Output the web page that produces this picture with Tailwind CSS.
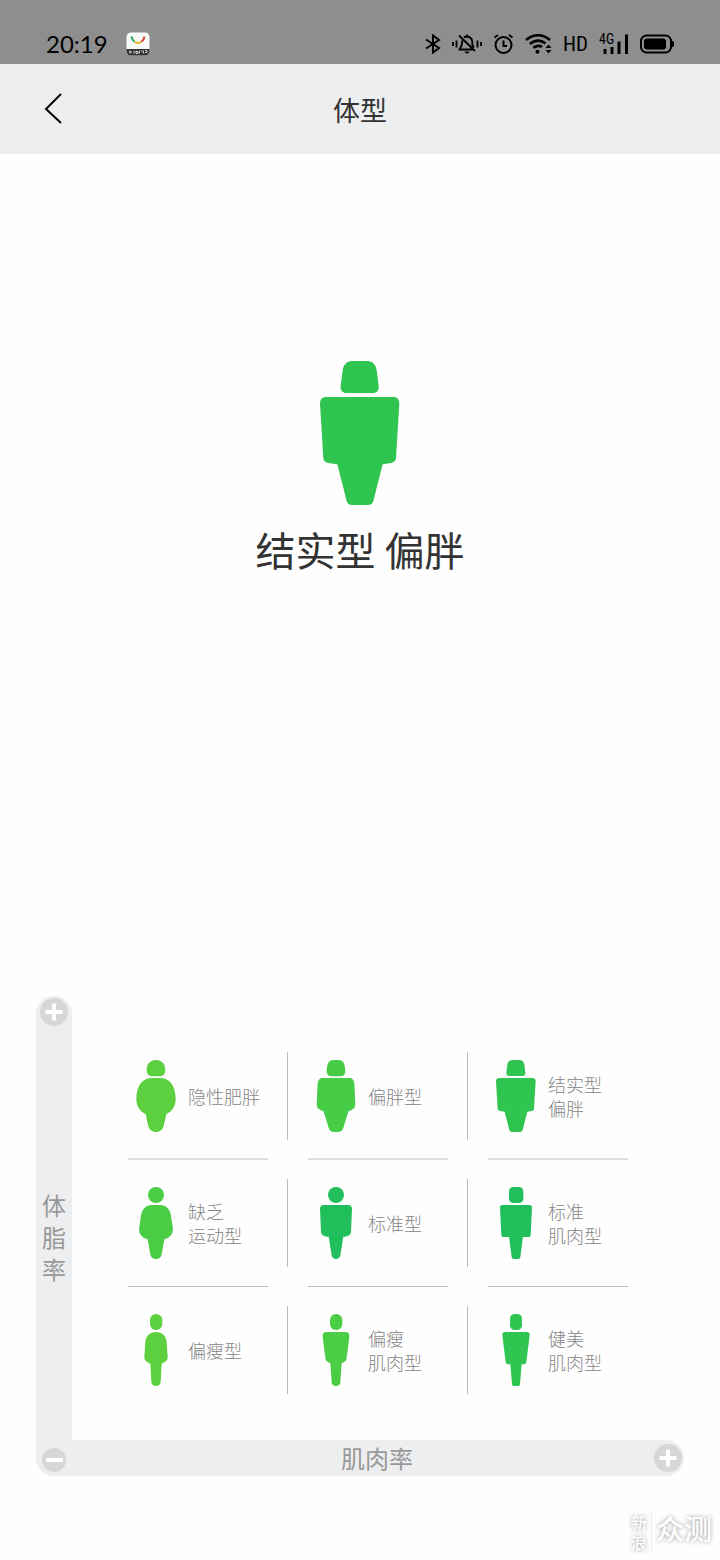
<!DOCTYPE html>
<html lang="zh-CN">
<head>
<meta charset="utf-8">
<meta name="viewport" content="width=device-width, initial-scale=1">
<title>体型</title>
<script src="https://cdn.jsdelivr.net/npm/@tailwindcss/browser@4"></script>
</head>
<body class="flex min-h-screen flex-col bg-[#fefefe] font-['Noto_Sans_CJK_SC',sans-serif] text-[#333]">

<!-- Body silhouettes, shared by the hero and the matrix -->
<svg class="hidden" aria-hidden="true">
  <symbol id="b1" viewBox="0 0 120 216"><path d="M60 0C78 0 88 13 88 30C88 42 80 49 70 49H50C40 49 32 42 32 30C32 13 42 0 60 0ZM45 54H75C103 54 119 82 119 116C119 140 107 155 91 162L84 195C81 209 72 216 60 216C48 216 39 209 36 195L29 162C13 155 1 140 1 116C1 82 17 54 45 54Z"/></symbol>
  <symbol id="b2" viewBox="0 0 120 216"><path d="M52 0H68C80 0 86 9 87 24L88 34C88 44 82 49 74 49H46C38 49 32 44 32 34L33 24C34 9 40 0 52 0ZM20 54H100C109 54 114 60 115 70L118 132C118 142 113 148 99 154C96 155 96 158 95 162L82 203C79 212 74 216 66 216H54C46 216 41 212 38 203L25 162C24 158 24 155 21 154C7 148 2 142 2 132L5 70C6 60 11 54 20 54Z"/></symbol>
  <symbol id="b3" viewBox="0 0 120 216"><path d="M48 0H71C79 0 84 6 85 14L88 37C89 44 85 48 79 48H40C34 48 30 44 31 37L34 14C35 6 40 0 48 0ZM9 54H110C116 54 119 58 119 64L114 146C114 150 111 152 107 153L94 155L80 210C79 214 76 216 72 216H48C44 216 41 214 40 210L26 155L12 153C8 152 5 150 5 146L0 64C0 58 3 54 9 54Z"/></symbol>
  <symbol id="b4" viewBox="0 0 120 216"><circle cx="60" cy="24" r="24"/><path d="M48 54H72C94 54 104 72 106 92L111 126C111 144 98 154 85 157L77 203C75 212 68 216 60 216C52 216 45 212 43 203L35 157C22 154 9 144 9 126L14 92C16 72 26 54 48 54Z"/></symbol>
  <symbol id="b5" viewBox="0 0 120 216"><circle cx="60" cy="24" r="24"/><path d="M24 54H96C104 54 108 58 108 66L105 134C104 144 96 149 82 149L73 205C72 212 67 216 60 216C53 216 48 212 47 205L38 149C24 149 16 144 15 134L12 66C12 58 16 54 24 54Z"/></symbol>
  <symbol id="b6" viewBox="0 0 120 216"><rect x="39" y="0" width="43" height="48" rx="13"/><path d="M20 54H100C106 54 108 57 108 62L104 144C104 148 102 150 98 150H81L73 210C72 214 70 216 66 216H54C50 216 48 214 47 210L39 150H22C18 150 16 148 16 144L12 62C12 57 14 54 20 54Z"/></symbol>
  <symbol id="b7" viewBox="0 0 120 216"><rect x="42" y="0" width="37" height="48" rx="18"/><path d="M60 54C78 54 91 66 92 84L95 128C95 139 88 144 77 149L74 203C73 212 68 216 60 216C52 216 47 212 46 203L43 149C32 144 25 139 25 128L28 84C29 66 42 54 60 54Z"/></symbol>
  <symbol id="b8" viewBox="0 0 120 216"><rect x="42" y="0" width="37" height="48" rx="18"/><path d="M31 54H89C97 54 101 60 100 68L92 132C91 140 87 143 77 148L73 205C73 212 68 216 60 216C52 216 47 212 47 205L43 148C33 143 29 140 28 132L20 68C19 60 23 54 31 54Z"/></symbol>
  <symbol id="b9" viewBox="0 0 120 216"><rect x="42" y="0" width="36" height="48" rx="14"/><path d="M28 54H92C99 54 102 58 101 64L91 145C90 149 88 151 85 151H77L72 211C72 214 70 216 67 216H53C50 216 48 214 48 211L43 151H35C32 151 30 149 29 145L19 64C18 58 21 54 28 54Z"/></symbol>
</svg>

<!-- Status bar -->
<div class="flex h-16 items-center justify-between bg-[#8e8e8e] pt-6 pr-[46px] pl-[46px] text-black">
  <div class="flex items-center gap-[18px]">
    <time class="font-['Lato',sans-serif] text-2xl leading-6">20:19</time>
    <svg class="h-6 w-6" viewBox="0 0 24 24" aria-hidden="true">
      <rect x=".5" y=".5" width="23" height="23" rx="4.500" fill="#fafafa"/>
      <path d="M.5 17H23.500V19A4.500 4.500 0 0 1 19 23.500H5A4.500 4.500 0 0 1 .5 19Z" fill="#333"/>
      <g fill="none" stroke-width="2">
        <path d="M5.500 4.500Q6 8 8.500 9.800" stroke="#2fa866"/>
        <path d="M8.500 9.800Q12 12 15.500 9.800" stroke="#e8b93a"/>
        <path d="M15.500 9.800Q18 8 18.500 4.500" stroke="#d8453e"/>
      </g>
      <path d="M4 18.500v3M3 20h3M8 19v2.500M10 18.500v3h2v-2h-2M13.500 18.500v3M15 19h2.500v2.500M19 18.500h2v2h-2" fill="none" stroke="#ddd" stroke-width=".9"/>
    </svg>
  </div>
  <div class="flex items-center gap-[11px]">
    <svg class="h-5 w-4" viewBox="0 0 16 20" fill="none" stroke="#000" stroke-width="2" aria-label="蓝牙"><path d="M1 5.500L14 14L8 18.500V1.500L14 6L1 14.500"/></svg>
    <svg class="h-5 w-[30px]" viewBox="0 0 30 20" fill="none" stroke="#000" stroke-width="1.800" aria-label="静音"><path d="M1 8v4M4.500 6.500v7M25.500 6.500v7M29 8v4M7 1.500L23 17M10.500 6.500Q9.800 8 9.800 11L7.500 15.500H20.500M12 3.500Q13 2.500 15 2.500Q20 3 20.300 8V11L22 13.500M15 .5V3"/><path d="M12.500 17.500H17.500Q17 19.500 15 19.500T12.500 17.500Z" fill="#000" stroke="none"/></svg>
    <svg class="h-5 w-[21px]" viewBox="0 0 21 20" fill="none" stroke="#000" stroke-width="2" aria-label="闹钟"><circle cx="10.500" cy="11" r="8"/><path d="M10.500 6.500V12H14M1.500 3.500L5 1M19.500 3.500L16 1"/></svg>
    <svg class="h-5 w-[27px]" viewBox="0 0 27 20" fill="none" stroke="#000" stroke-width="2.600" aria-label="无线网络"><path d="M1 6Q13 -3.500 25 6M4.800 10Q13 3.500 20.500 9.500M8.300 13.800Q13 10.300 17 13"/><circle cx="12.500" cy="17.700" r="2" fill="#000" stroke="none"/><path d="M20.500 14L23.500 10.500L26.500 14ZM20.500 16L23.500 19.500L26.500 16Z" fill="#000" stroke="none"/></svg>
    <span class="font-['Roboto_Condensed','Liberation_Sans_Narrow','Roboto',sans-serif] text-[21px] leading-5">HD</span>
    <svg class="h-6 w-[30px] overflow-visible" viewBox="0 0 30 24" aria-label="信号"><text x="0" y="12" class="font-['Roboto_Condensed','Roboto',sans-serif] text-sm">4G</text><path d="M4.500 17h3v5h-3zM11.500 15h3v7h-3zM18.500 9.500h3V22h-3zM26 2.500h3V22h-3z"/></svg>
    <svg class="h-5 w-[34px]" viewBox="0 0 34 20" aria-label="电量"><rect x="1" y="1.500" width="30" height="17" rx="5.500" fill="none" stroke="#000" stroke-width="2"/><rect x="4" y="4.500" width="22" height="11" rx="3"/><path d="M31.500 7H32.500Q34 7 34 8.500V11.500Q34 13 32.500 13H31.500Z"/></svg>
  </div>
</div>

<!-- Title bar -->
<header class="grid h-[90px] grid-cols-[1fr_auto_1fr] items-center bg-[#edeef0] px-9">
  <button type="button" aria-label="返回" class="flex h-12 w-[34px] items-center justify-center">
    <svg class="h-8 w-[18px]" viewBox="0 0 18 32" fill="none" stroke="#000" stroke-width="2"><path d="M17 1L2 16L17 30"/></svg>
  </button>
  <h1 class="pt-0.5 text-[27px] leading-9">体型</h1>
</header>

<main class="flex flex-1 flex-col">
  <section class="flex flex-col items-center pt-[207px]">
    <svg class="h-36 w-20 fill-[#30c451]" aria-hidden="true"><use href="#b3"/></svg>
    <h2 class="mt-5 text-[40px] leading-[48px]">结实型 偏胖</h2>
  </section>

  <section class="mx-9 mt-auto grid grid-cols-[36px_1fr]">
    <div class="row-span-2 flex flex-col items-center justify-between rounded-t-full rounded-bl-full bg-[#edeef0] pt-0.5 pb-1 text-2xl leading-8 text-[#999]">
      <svg class="h-7 w-7" viewBox="0 0 28 28" aria-label="高"><circle cx="14" cy="14" r="14" fill="#d6d7d8"/><path d="M5.500 14H22.500M14 5.500V22.500" stroke="#fff" stroke-width="4"/></svg>
      <p class="w-6 break-all">体脂率</p>
      <svg class="h-6 w-6" viewBox="0 0 24 24" aria-label="低"><circle cx="12" cy="12" r="12" fill="#d6d7d8"/><path d="M4 12H21" stroke="#fff" stroke-width="4"/></svg>
    </div>

    <div class="px-14 pt-14 pb-[46px] text-lg leading-6 font-light text-[#858585]">
      <div class="flex h-[88px]">
        <div class="flex flex-1 items-center gap-3 pl-2"><svg class="h-[72px] w-10 fill-[#5cd03e]"><use href="#b1"/></svg><p>隐性肥胖</p></div>
        <div class="mr-5 ml-[19px] w-px bg-[#bbb]"></div>
        <div class="flex flex-1 items-center gap-3 pl-2"><svg class="h-[72px] w-10 fill-[#46cc46]"><use href="#b2"/></svg><p>偏胖型</p></div>
        <div class="mr-5 ml-[19px] w-px bg-[#bbb]"></div>
        <div class="flex flex-1 items-center gap-3 pl-2"><svg class="h-[72px] w-10 fill-[#30c451]"><use href="#b3"/></svg><p>结实型<br>偏胖</p></div>
      </div>
      <div class="grid grid-cols-3 gap-x-10 pt-[18px] pb-[19px]"><hr class="h-0.5 border-0 bg-[#e0e0e0]"><hr class="h-0.5 border-0 bg-[#e0e0e0]"><hr class="h-0.5 border-0 bg-[#e0e0e0]"></div>
      <div class="flex h-[88px]">
        <div class="flex flex-1 items-center gap-3 pl-2"><svg class="h-[72px] w-10 fill-[#4bce46]"><use href="#b4"/></svg><p>缺乏<br>运动型</p></div>
        <div class="mr-5 ml-[19px] w-px bg-[#bbb]"></div>
        <div class="flex flex-1 items-center gap-3 pl-2"><svg class="h-[72px] w-10 fill-[#20bf5c]"><use href="#b5"/></svg><p>标准型</p></div>
        <div class="mr-5 ml-[19px] w-px bg-[#bbb]"></div>
        <div class="flex flex-1 items-center gap-3 pl-2"><svg class="h-[72px] w-10 fill-[#20bf5c]"><use href="#b6"/></svg><p>标准<br>肌肉型</p></div>
      </div>
      <div class="grid grid-cols-3 gap-x-10 py-[19px]"><hr class="h-px border-0 bg-[#bbb]"><hr class="h-px border-0 bg-[#bbb]"><hr class="h-px border-0 bg-[#bbb]"></div>
      <div class="flex h-[88px]">
        <div class="flex flex-1 items-center gap-3 pl-2"><svg class="h-[72px] w-10 fill-[#5cd03e]"><use href="#b7"/></svg><p>偏瘦型</p></div>
        <div class="mr-5 ml-[19px] w-px bg-[#bbb]"></div>
        <div class="flex flex-1 items-center gap-3 pl-2"><svg class="h-[72px] w-10 fill-[#4bce46]"><use href="#b8"/></svg><p>偏瘦<br>肌肉型</p></div>
        <div class="mr-5 ml-[19px] w-px bg-[#bbb]"></div>
        <div class="flex flex-1 items-center gap-3 pl-2"><svg class="h-[72px] w-10 fill-[#30c451]"><use href="#b9"/></svg><p>健美<br>肌肉型</p></div>
      </div>
    </div>

    <div class="grid h-9 grid-cols-[1fr_auto_1fr] items-center rounded-r-full bg-[#edeef0] pr-0.5 text-2xl leading-8 text-[#999]">
      <span></span>
      <p>肌肉率</p>
      <svg class="h-7 w-7 justify-self-end" viewBox="0 0 28 28" aria-label="高"><circle cx="14" cy="14" r="14" fill="#d6d7d8"/><path d="M5.500 14H22.500M14 5.500V22.500" stroke="#fff" stroke-width="4"/></svg>
    </div>
  </section>
</main>

<footer class="flex h-[84px] items-start justify-end gap-1 pt-9 pr-2 text-white [text-shadow:0_0_4px_#999]">
  <p class="border-r border-[#eee] pr-1 text-base leading-5 font-medium">新<br>浪</p>
  <p class="text-[28px] leading-8 font-medium">众测</p>
</footer>
</body>
</html>
